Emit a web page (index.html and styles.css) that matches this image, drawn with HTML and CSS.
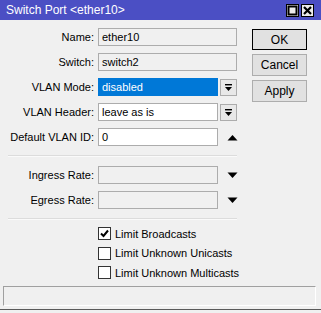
FILE: index.html
```html
<!DOCTYPE html>
<html>
<head>
<title>Switch Port &lt;ether10&gt;</title>
<link rel="stylesheet" href="styles.css">
</head>
<body>
<div class="window">
<div class="titlebar">
<span class="title">Switch Port &lt;ether10&gt;</span>
<span class="tb-btns">
<span class="tb-btn"><svg width="11" height="11" viewBox="0 0 11 11"><rect x="1.5" y="1.5" width="8" height="8" fill="none" stroke="#000" stroke-width="2"/></svg></span>
<span class="tb-btn"><svg width="11" height="11" viewBox="0 0 11 11"><path d="M2 2L9 9M9 2L2 9" stroke="#000" stroke-width="2.2"/></svg></span>
</span>
</div>

<div class="main">
<div class="form">
<div class="row"><span class="lbl">Name:</span><span class="field wide ro">ether10</span></div>
<div class="row"><span class="lbl">Switch:</span><span class="field wide ro">switch2</span></div>
<div class="row"><span class="lbl">VLAN Mode:</span><span class="field sel">disabled</span><span class="drop"><svg width="9" height="9" viewBox="0 0 9 9"><rect x="1" y="1" width="7" height="1.4" fill="#000"/><path d="M1 4H8L4.5 8Z" fill="#000"/></svg></span></div>
<div class="row"><span class="lbl">VLAN Header:</span><span class="field">leave as is</span><span class="drop"><svg width="9" height="9" viewBox="0 0 9 9"><rect x="1" y="1" width="7" height="1.4" fill="#000"/><path d="M1 4H8L4.5 8Z" fill="#000"/></svg></span></div>
<div class="row"><span class="lbl">Default VLAN ID:</span><span class="field">0</span><span class="spin"><svg width="11" height="7" viewBox="0 0 11 7"><path d="M0.5 6.5H10.5L5.5 1Z" fill="#000"/></svg></span></div>

<div class="sep"></div>

<div class="row"><span class="lbl">Ingress Rate:</span><span class="field ro"></span><span class="spin"><svg width="11" height="7" viewBox="0 0 11 7"><path d="M0.5 0.5H10.5L5.5 6Z" fill="#000"/></svg></span></div>
<div class="row"><span class="lbl">Egress Rate:</span><span class="field ro"></span><span class="spin"><svg width="11" height="7" viewBox="0 0 11 7"><path d="M0.5 0.5H10.5L5.5 6Z" fill="#000"/></svg></span></div>

<div class="sep"></div>

<div class="checks">
<div class="check"><span class="box"><svg width="11" height="11" viewBox="0 0 11 11"><path d="M2 5.5L4.5 8L9 2.5" fill="none" stroke="#000" stroke-width="2"/></svg></span>Limit Broadcasts</div>
<div class="check"><span class="box"></span>Limit Unknown Unicasts</div>
<div class="check"><span class="box"></span>Limit Unknown Multicasts</div>
</div>
</div>

<div class="actions">
<span class="btn default">OK</span>
<span class="btn">Cancel</span>
<span class="btn">Apply</span>
</div>
</div>

<div class="status"></div>
</div>
</body>
</html>
```

FILE: styles.css
```css
/* MikroTik style dialog */

html, body
{ margin: 0;
padding: 0;
background-color: #f0f0f0;
}

body
{ font-family: "Liberation Sans", Arial, sans-serif;
font-size: 11px;
color: #000;
}

div.window
{ width: 321px;
height: 309px;
border-bottom: 1px solid #5a5a5a;
display: flex;
flex-direction: column;
}

/* Title bar */

div.titlebar
{ height: 20px;
background-color: #4b4fc4;
display: flex;
align-items: center;
justify-content: space-between;
}

span.title
{ color: #fff;
font-size: 12px;
padding-left: 6px;
}

span.tb-btns
{ display: flex;
gap: 2px;
padding-right: 7px;
}

span.tb-btn
{ width: 11px;
height: 11px;
border: 1px solid #000;
background-color: #ececec;
display: flex;
}

/* Form */

div.main
{ display: flex;
}

div.form
{ width: 238px;
padding-top: 8px;
display: flex;
flex-direction: column;
gap: 7px;
}

div.row
{ display: flex;
align-items: center;
height: 18px;
}

span.lbl
{ width: 94px;
margin-right: 4px;
text-align: right;
white-space: nowrap;
}

span.field
{ box-sizing: border-box;
width: 120px;
height: 18px;
line-height: 16px;
padding-left: 3px;
border: 1px solid #acacac;
background-color: #fff;
}

span.field.wide
{ width: 139px;
}

span.field.ro
{ background-color: #f0f0f0;
}

span.field.sel
{ background-color: #0078d7;
border-color: #0078d7;
color: #fff;
}

span.drop
{ box-sizing: border-box;
width: 17px;
height: 17px;
margin-left: 2px;
border: 1px solid #acacac;
background-color: #e8e8e8;
display: flex;
align-items: center;
justify-content: center;
}

span.spin
{ width: 11px;
margin-left: 9px;
display: flex;
}

div.sep
{ height: 1px;
margin: 2px 0 2px 8px;
width: 229px;
background-color: #dcdcdc;
border-bottom: 1px solid #fafafa;
}

div.checks
{ display: flex;
flex-direction: column;
margin-top: -5px;
padding-left: 98px;
}

div.check
{ height: 19.5px;
display: flex;
align-items: center;
gap: 4px;
white-space: nowrap;
}

span.box
{ box-sizing: border-box;
flex: none;
width: 13px;
height: 13px;
border: 1px solid #333;
background-color: #fff;
display: flex;
align-items: center;
justify-content: center;
}

/* Buttons */

div.actions
{ margin-left: 14px;
padding-top: 9px;
display: flex;
flex-direction: column;
gap: 4px;
}

span.btn
{ box-sizing: border-box;
width: 55px;
height: 22px;
border: 1px solid #adadad;
background-color: #e1e1e1;
display: flex;
align-items: center;
justify-content: center;
font-size: 12px;
}

span.btn.default
{ border-color: #000;
height: 21px;
}

/* Status bar */

div.status
{ margin: auto 5px 3px 3px;
height: 18px;
border-top: 1px solid #a0a0a0;
border-left: 1px solid #a0a0a0;
border-right: 1px solid #fff;
border-bottom: 1px solid #fff;
}
```
